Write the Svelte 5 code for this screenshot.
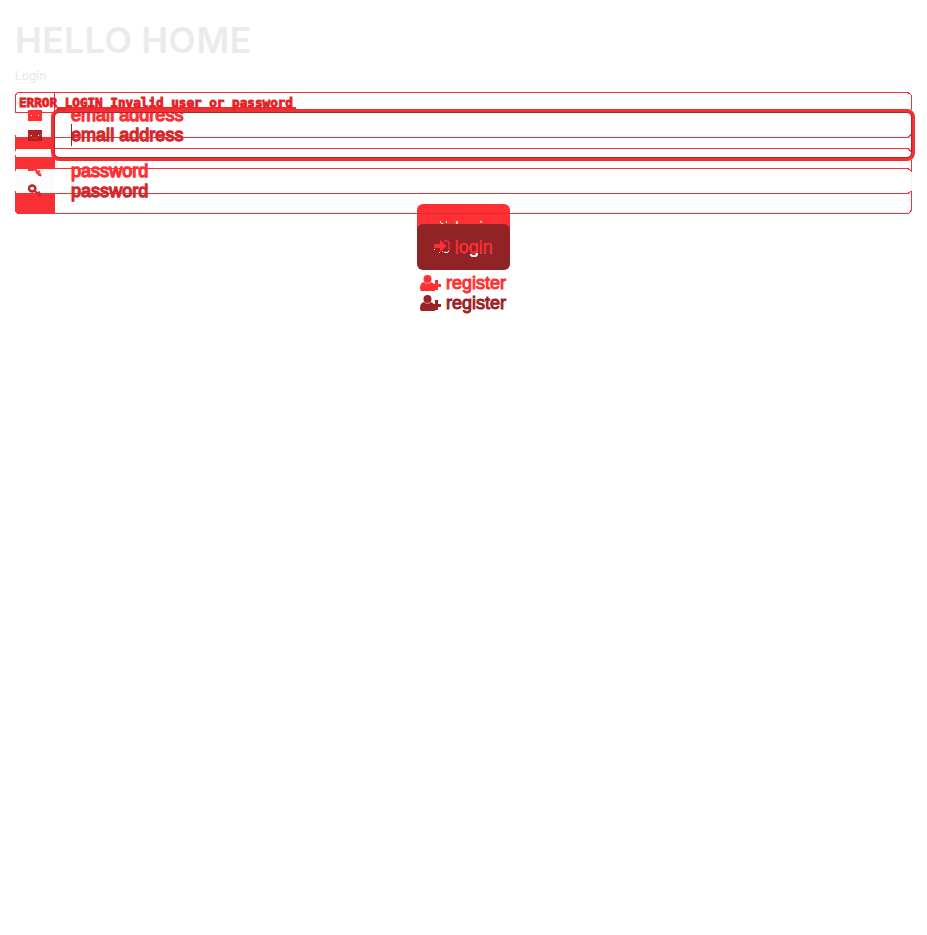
<script>
  const fields = ['email address', 'password'];
</script>

<main>
  <header>
    <h1>HELLO HOME</h1>
    <p>Login</p>
  </header>
  <section class="stage">
    <svg class="frames" width="927" height="140" viewBox="0 86 927 140" shape-rendering="crispEdges">
      <path fill="#fcfcfc" d="M15 113h38v24H15zM15 149h38v8H15zM15 169h39v24H15z" />
      <path fill="#f83033" d="M15 137h40v12H15zM15 157h40v12H15zM15 193h40v21H17l-2-2z" />
      <g fill="none" stroke="#fa3033">
        <path d="M15.500 112V95l2-2.500H908l3.500 3V110M54.500 92V112M15 112.500H55M54 137.500H908l3-3M15 148.500H908l3 3M15 168.500H908l3.500 3V160M54 193.500H908l3.500-3V210l-3 3.500H17" />
        <path d="M15.500 135v3M15.500 147v4M15.500 155v4M15.500 167v4M15.500 191v21" />
      </g>
      <path d="M911.500 172v19" stroke="#f4f4f4" />
    </svg>

    <div class="alert">ERROR_LOGIN Invalid user or password</div>
    <i class="baseline"></i>
    <div class="ring"></div>
    <div class="layer before">
      {#each fields as label, i}
        <div class="field">
          <span class="addon">
            {#if i === 0}
              <svg width="14" height="12" viewBox="0 0 14 12"><path fill="currentColor" d="M0 1h14v11H0z" /><path fill="#fff" d="M3 6h1v1H3zM10 6h1v1h-1z" /></svg>
            {:else}
              <svg width="14" height="14" viewBox="0 0 14 14"><path d="M1 4v2h4l2-1V3M7 5l6 7M8 9l4-2M10 11l3-1" fill="none" stroke="currentColor" stroke-width="2.200" /></svg>
            {/if}
          </span>
          <span class="label">{label}</span>
        </div>
      {/each}
      <div class="button">
        <svg width="16" height="14" viewBox="0 0 16 14"><path fill="#fff" d="M6 4h1v2H6zM7 6h2v1H7zM12 4h1v2h-1z" /></svg>
        <span>login</span>
      </div>
    </div>

    <div class="layer after">
      {#each fields as label, i}
        <div class="field">
          <span class="addon">
            {#if i === 0}
              <svg width="14" height="12" viewBox="0 0 14 12" shape-rendering="crispEdges"><path fill="#ab2225" d="M0 1h14v11H0z" /><path d="M0 5l4 3 3 2 3-2 4-3" fill="none" stroke="#dd292c" /><path fill="#fff" d="M3 6h1v1H3zM10 6h1v1h-1z" /></svg>
            {:else}
              <svg width="14" height="14" viewBox="0 0 14 14"><ellipse cx="4.200" cy="4.500" rx="3.200" ry="3" fill="none" stroke="#b52629" stroke-width="2.400" /><path d="M6 6l7 7M8 10l4-2M10 12l3-2" fill="none" stroke="#d52b2e" stroke-width="2.200" /></svg>
            {/if}
          </span>
          <span class="label">{label}</span>
        </div>
      {/each}
      <div class="button">
        <svg width="16" height="14" viewBox="0 0 16 14"><path fill="#ff3033" d="M0 4h6V0l6.500 6L6 12V8H0z" /><path d="M10 .800h3q2 0 2 2v7q0 2-2 2h-3" fill="none" stroke="#ff3033" stroke-width="1.300" /><path d="M0 9h1v1H0zM5 12h1v1H5zM8 11h1v1H8zM10 12h4v1h-4zM14 11h1v1h-1z" fill="#fff" /></svg>
        <span>login</span>
      </div>
    </div>
    <i class="rule"></i>
    <i class="caret"></i>
  </section>

  <footer>
    {#each ['bright', 'dark'] as tone}
      <div class="register {tone}">
        <svg width="21" height="16" viewBox="0 0 21 16" fill="currentColor"><circle cx="7.500" cy="4" r="4" /><path d="M4 7q3.500 3 7 0q3 1 4 5v4H1q-1-1-1-3q0-5 4-6zM15 5h3v4h3v3h-3v3h-3v-3h-4V9h4z" /></svg>
        <span>register</span>
      </div>
    {/each}
  </footer>
</main>

<style>
  :global(body) { margin: 0; background: #fff; }
  main { width: 927px; height: 935px; overflow: hidden; font-family: "Liberation Sans", Arial, sans-serif; }
  header { height: 86px; padding: 20px 0 0 15px; box-sizing: border-box; color: #ebebeb; font-family: Inter, sans-serif; }
  h1 { margin: 0; font-size: 36px; line-height: 40px; font-weight: 600; letter-spacing: .2px; }
  p { margin: 7px 0 0; font-size: 12px; line-height: 18px; -webkit-text-stroke: .2px currentColor; }
  .stage { position: relative; height: 187px; }
  .frames { position: absolute; left: 0; top: 0; }
  .alert { position: absolute; z-index: 3; left: 19px; top: 10px; font: bold 12.65px/13px "DejaVu Sans Mono", monospace; color: #e42126; white-space: pre; -webkit-text-stroke: .9px currentColor; }
  .baseline { position: absolute; z-index: 2; left: 57px; top: 21px; width: 239px; height: 2px; background: #ed2d30; }
  .ring { position: absolute; z-index: 2; left: 51px; top: 23px; width: 864px; height: 52px; box-sizing: border-box; border: 4px solid #f13033; border-radius: 8px; }
  .ring::after { content: ''; position: absolute; inset: -1px; border: 1px solid #b3262b; border-radius: 5px; }
  .layer { position: absolute; left: 15px; width: 897px; }
  .before { top: 6px; color: #ff3033; }
  .after { top: 26px; color: #d5282c; }
  .field { height: 46px; margin-bottom: 10px; display: flex; align-items: center; font-size: 18px; }
  .addon { width: 40px; display: flex; justify-content: center; }
  .label { margin-left: 16px; line-height: 16px; letter-spacing: .03px; -webkit-text-stroke: 1.3px currentColor; }
  .button { width: 93px; height: 46px; box-sizing: border-box; margin: 0 auto; display: flex; align-items: center; justify-content: center; gap: 5px; border-radius: 6px; font-size: 18px; line-height: 20px; }
  .before .button { background: #ff3033; color: #fff; }
  .before .button span { position: relative; top: 1px; }
  .before .button svg { position: relative; top: -3px; }
  .after .button { background: #912226; padding-bottom: 1px; }
  .after .button span { background: linear-gradient(#ff3033 0 16px, #fff 16px); background-clip: text; color: transparent; -webkit-text-stroke: .7px transparent; text-shadow: none; }
  .rule { position: absolute; left: 417px; top: 127px; width: 93px; height: 1px; background: #d82b2e; }
  .caret { position: absolute; left: 71px; top: 38px; width: 1px; height: 22px; background: #912226; }
  footer { width: 87px; margin: 0 auto; }
  .register { height: 20px; display: flex; align-items: center; gap: 5px; font-size: 18px; line-height: 20px; -webkit-text-stroke: 1px currentColor; }
  .bright { color: #ff3033; }
  .dark { color: #9b2227; }
</style>
